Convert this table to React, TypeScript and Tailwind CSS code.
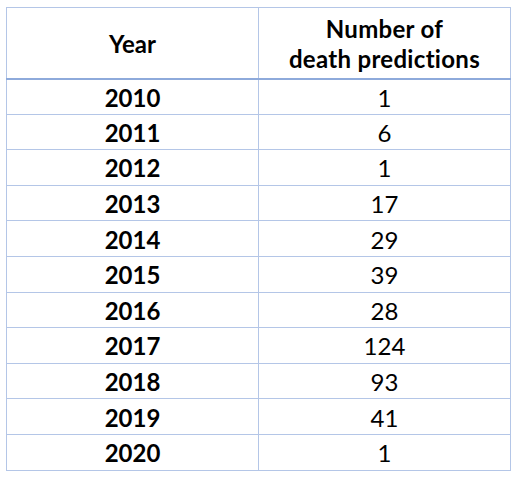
import React from 'react';

const rows = [
  { year: '2010', count: 1 },
  { year: '2011', count: 6 },
  { year: '2012', count: 1 },
  { year: '2013', count: 17 },
  { year: '2014', count: 29 },
  { year: '2015', count: 39 },
  { year: '2016', count: 28 },
  { year: '2017', count: 124 },
  { year: '2018', count: 93 },
  { year: '2019', count: 41 },
  { year: '2020', count: 1 },
];

const App = () => {
  return (
    <div className="w-[520px] h-[477px] bg-white pl-[6px] pt-[7px] text-black font-['Lato','Liberation_Sans',sans-serif]">
      <table className="w-[505px] border-collapse table-fixed">
        <thead>
          <tr className="h-[71px]">
            <th className="w-1/2 border border-[#b4c6e7] border-b-2 border-b-[#8eaadb] text-[24px] font-bold align-middle pt-[2px]">
              Year
            </th>
            <th className="w-1/2 border border-[#b4c6e7] border-b-2 border-b-[#8eaadb] text-[24px] font-bold leading-[30px] tracking-[0.3px] align-middle pt-[2px]">
              Number of
              <br />
              death predictions
            </th>
          </tr>
        </thead>
        <tbody>
          {rows.map((row) => (
            <tr key={row.year} className="h-[35.6px]">
              <td className="border border-[#b4c6e7] text-center text-[24px] font-bold leading-none pt-[2px]">
                {row.year}
              </td>
              <td className="border border-[#b4c6e7] text-center text-[24px] leading-none pt-[2px]">
                {row.count}
              </td>
            </tr>
          ))}
        </tbody>
      </table>
    </div>
  );
};

export default App;
